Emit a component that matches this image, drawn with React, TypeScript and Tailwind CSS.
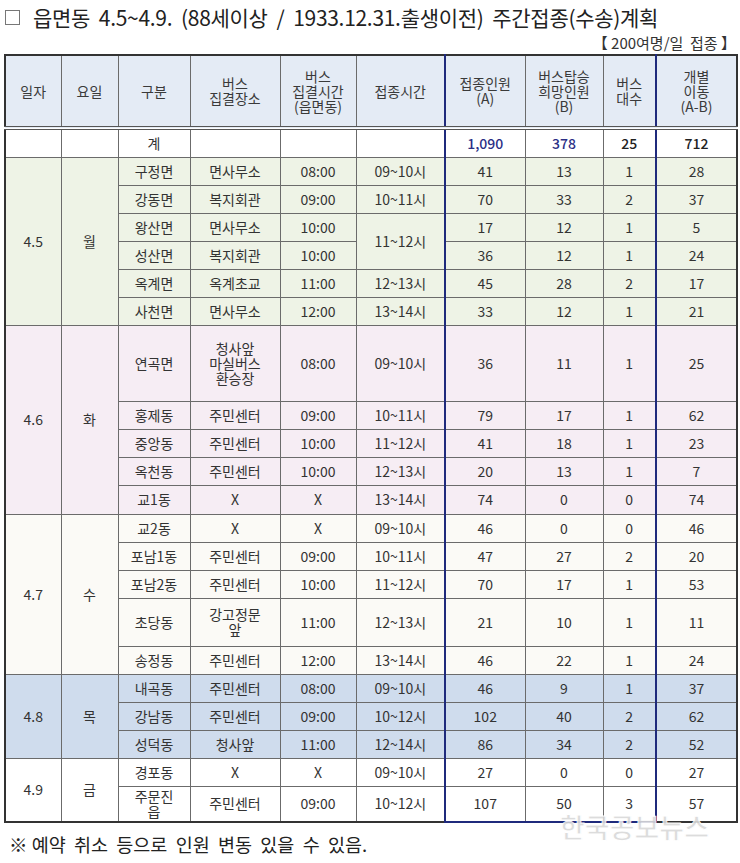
import React from "react";

type Row = {
  name: string;
  place: string;
  meet: string;
  time?: string;
  timeSpan?: number;
  a: string;
  b: string;
  bus: string;
  self: string;
  h: string;
};

type Group = {
  date: string;
  day: string;
  bg: string;
  rows: Row[];
};

const groups: Group[] = [
  {
    date: "4.5",
    day: "월",
    bg: "bg-[#eef3e6]",
    rows: [
      { name: "구정면", place: "면사무소", meet: "08:00", time: "09~10시", a: "41", b: "13", bus: "1", self: "28", h: "h-[28px]" },
      { name: "강동면", place: "복지회관", meet: "09:00", time: "10~11시", a: "70", b: "33", bus: "2", self: "37", h: "h-[28px]" },
      { name: "왕산면", place: "면사무소", meet: "10:00", time: "11~12시", timeSpan: 2, a: "17", b: "12", bus: "1", self: "5", h: "h-[28px]" },
      { name: "성산면", place: "복지회관", meet: "10:00", a: "36", b: "12", bus: "1", self: "24", h: "h-[28px]" },
      { name: "옥계면", place: "옥계초교", meet: "11:00", time: "12~13시", a: "45", b: "28", bus: "2", self: "17", h: "h-[28px]" },
      { name: "사천면", place: "면사무소", meet: "12:00", time: "13~14시", a: "33", b: "12", bus: "1", self: "21", h: "h-[28px]" },
    ],
  },
  {
    date: "4.6",
    day: "화",
    bg: "bg-[#f6edf4]",
    rows: [
      { name: "연곡면", place: "청사앞\n마실버스\n환승장", meet: "08:00", time: "09~10시", a: "36", b: "11", bus: "1", self: "25", h: "h-[76px]" },
      { name: "홍제동", place: "주민센터", meet: "09:00", time: "10~11시", a: "79", b: "17", bus: "1", self: "62", h: "h-[28px]" },
      { name: "중앙동", place: "주민센터", meet: "10:00", time: "11~12시", a: "41", b: "18", bus: "1", self: "23", h: "h-[28px]" },
      { name: "옥천동", place: "주민센터", meet: "10:00", time: "12~13시", a: "20", b: "13", bus: "1", self: "7", h: "h-[28px]" },
      { name: "교1동", place: "X", meet: "X", time: "13~14시", a: "74", b: "0", bus: "0", self: "74", h: "h-[29px]" },
    ],
  },
  {
    date: "4.7",
    day: "수",
    bg: "bg-[#fbfaf6]",
    rows: [
      { name: "교2동", place: "X", meet: "X", time: "09~10시", a: "46", b: "0", bus: "0", self: "46", h: "h-[28px]" },
      { name: "포남1동", place: "주민센터", meet: "09:00", time: "10~11시", a: "47", b: "27", bus: "2", self: "20", h: "h-[28px]" },
      { name: "포남2동", place: "주민센터", meet: "10:00", time: "11~12시", a: "70", b: "17", bus: "1", self: "53", h: "h-[28px]" },
      { name: "초당동", place: "강고정문\n앞", meet: "11:00", time: "12~13시", a: "21", b: "10", bus: "1", self: "11", h: "h-[48px]" },
      { name: "송정동", place: "주민센터", meet: "12:00", time: "13~14시", a: "46", b: "22", bus: "1", self: "24", h: "h-[28px]" },
    ],
  },
  {
    date: "4.8",
    day: "목",
    bg: "bg-[#cfdced]",
    rows: [
      { name: "내곡동", place: "주민센터", meet: "08:00", time: "09~10시", a: "46", b: "9", bus: "1", self: "37", h: "h-[28px]" },
      { name: "강남동", place: "주민센터", meet: "09:00", time: "10~12시", a: "102", b: "40", bus: "2", self: "62", h: "h-[28px]" },
      { name: "성덕동", place: "청사앞", meet: "11:00", time: "12~14시", a: "86", b: "34", bus: "2", self: "52", h: "h-[28px]" },
    ],
  },
  {
    date: "4.9",
    day: "금",
    bg: "bg-white",
    rows: [
      { name: "경포동", place: "X", meet: "X", time: "09~10시", a: "27", b: "0", bus: "0", self: "27", h: "h-[28px]" },
      { name: "주문진\n읍", place: "주민센터", meet: "09:00", time: "10~12시", a: "107", b: "50", bus: "3", self: "57", h: "h-[36px]" },
    ],
  },
];

const cell = "border border-[#6b6b6b] text-center align-middle px-0 py-0";
const navyL = "border-l-2 border-l-[#1f2a7c]";
const head = "border-b-[4px] border-b-[#555] border-double font-normal";

const Lines = ({ text }: { text: string }) => (
  <>
    {text.split("\n").map((t, i) => (
      <div key={i}>{t}</div>
    ))}
  </>
);

export default function App() {
  return (
    <div
      className="relative w-[740px] h-[863px] bg-white text-[#333]"
      style={{ fontFamily: '"Noto Sans CJK KR", "Noto Sans", sans-serif' }}
    >
      {/* title */}
      <div className="flex items-center pl-[5px] pt-[4px] h-[30px] text-[21px] leading-[26px] text-[#222] tracking-[-0.3px]">
        <span className="inline-block w-[15px] h-[15px] border border-[#777] mr-[13px]" />
        <span className="whitespace-pre">읍면동  4.5~4.9.  (88세이상  /  1933.12.31.출생이전)  주간접종(수송)계획</span>
      </div>

      <div className="flex justify-end pr-[4px] pt-[4px] h-[22px] items-center text-[15px] leading-[18px] text-[#333] whitespace-pre">
        【 200여명/일  접종 】
      </div>

      <div className="pl-[4px] pt-[2px]">
        <table className="w-[732px] table-fixed border-collapse border-2 border-[#333] text-[14px] leading-[15px]">
          <colgroup>
            <col className="w-[56px]" />
            <col className="w-[57px]" />
            <col className="w-[72px]" />
            <col className="w-[90px]" />
            <col className="w-[76px]" />
            <col className="w-[89px]" />
            <col className="w-[80px]" />
            <col className="w-[78px]" />
            <col className="w-[53px]" />
            <col className="w-[81px]" />
          </colgroup>
          <thead>
            <tr className="h-[73px] bg-[#e4ebf5] text-[#3a3a3a]">
              <th className={`${cell} ${head}`}>일자</th>
              <th className={`${cell} ${head}`}>요일</th>
              <th className={`${cell} ${head}`}>구분</th>
              <th className={`${cell} ${head}`}>
                <Lines text={"버스\n집결장소"} />
              </th>
              <th className={`${cell} ${head}`}>
                <Lines text={"버스\n집결시간\n(읍면동)"} />
              </th>
              <th className={`${cell} ${head}`}>접종시간</th>
              <th className={`${cell} ${navyL} ${head}`}>
                <Lines text={"접종인원\n(A)"} />
              </th>
              <th className={`${cell} ${head}`}>
                <Lines text={"버스탑승\n희망인원\n(B)"} />
              </th>
              <th className={`${cell} ${head}`}>
                <Lines text={"버스\n대수"} />
              </th>
              <th className={`${cell} ${navyL} ${head}`}>
                <Lines text={"개별\n이동\n(A-B)"} />
              </th>
            </tr>
          </thead>
          <tbody>
            <tr className="h-[29px] bg-white">
              <td className={cell}></td>
              <td className={cell}></td>
              <td className={cell}>계</td>
              <td className={cell}></td>
              <td className={cell}></td>
              <td className={cell}></td>
              <td className={`${cell} ${navyL} text-[#2b2f86] font-medium`}>1,090</td>
              <td className={`${cell} text-[#2b2f86] font-medium`}>378</td>
              <td className={`${cell} text-[#222] font-medium`}>25</td>
              <td className={`${cell} ${navyL} text-[#222] font-medium`}>712</td>
            </tr>
            {groups.map((g, gi) =>
              g.rows.map((r, ri) => {
                const last = gi === groups.length - 1 && ri === g.rows.length - 1;
                const navyB = last ? "border-b-2 border-b-[#1f2a7c]" : "";
                return (
                  <tr key={g.date + r.name} className={`${r.h} ${g.bg}`}>
                    {ri === 0 && (
                      <>
                        <td rowSpan={g.rows.length} className={cell}>
                          {g.date}
                        </td>
                        <td rowSpan={g.rows.length} className={cell}>
                          {g.day}
                        </td>
                      </>
                    )}
                    <td className={cell}>
                      <Lines text={r.name} />
                    </td>
                    <td className={cell}>
                      <Lines text={r.place} />
                    </td>
                    <td className={cell}>{r.meet}</td>
                    {r.time !== undefined && (
                      <td rowSpan={r.timeSpan ?? 1} className={cell}>
                        {r.time}
                      </td>
                    )}
                    <td className={`${cell} ${navyL} ${navyB}`}>{r.a}</td>
                    <td className={`${cell} ${navyB}`}>{r.b}</td>
                    <td className={`${cell} ${navyB}`}>{r.bus}</td>
                    <td className={`${cell} ${navyL}`}>{r.self}</td>
                  </tr>
                );
              })
            )}
          </tbody>
        </table>
      </div>

      <div className="pl-[9px] pt-[10px] text-[18.5px] leading-[22px] text-[#222] whitespace-pre">
        ※ 예약  취소  등으로  인원  변동  있을  수  있음.
      </div>

      {/* watermark */}
      <div
        className="absolute left-[560px] top-[810px] text-[27px] font-bold leading-[34px] text-[#d9d9d9] opacity-90"
        style={{ WebkitTextStroke: "1px #ffffff" }}
      >
        한국공보뉴스
      </div>
    </div>
  );
}
